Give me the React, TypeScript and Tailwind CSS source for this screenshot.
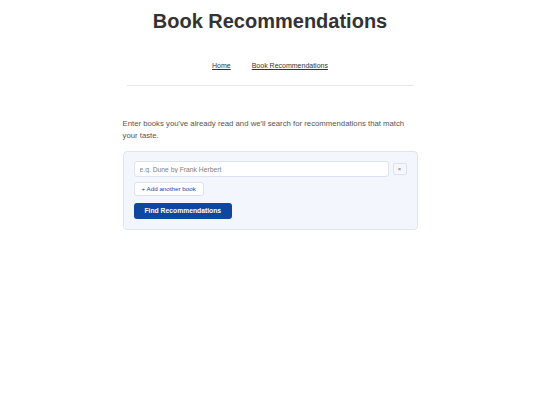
import React from 'react';

const App = () => {
  return (
    <div className="min-h-[405px] w-full bg-white font-['Liberation_Sans',Arial,sans-serif] text-[#333]">
      <div className="mx-auto w-[295px] pt-[8px]">
        <h1 className="text-center text-[20px] font-bold leading-[26px] text-[#333]">Book Recommendations</h1>
        <nav className="mt-[27px] flex justify-center gap-[21px] text-[7px] leading-[10px] text-[#333]">
          <a href="#" className="underline">Home</a>
          <a href="#" className="underline">Book Recommendations</a>
        </nav>
        <div className="mx-[4px] mt-[14px] h-px bg-[#e8e8e8]" />
        <p className="mt-[32px] text-[7.75px] leading-[12px] text-[#555]">
          Enter books you've already read and we'll search for recommendations that match your taste.
        </p>
        <div className="mt-[9px] flex flex-col items-start rounded-[4px] border border-[#dde5f2] bg-[#f3f6fd] px-[10px] pt-[9px] pb-[10px]">
          <div className="flex w-full items-center gap-[4px]">
            <input
              type="text"
              placeholder="e.g. Dune by Frank Herbert"
              className="h-[16px] flex-1 rounded-[3px] border border-[#dde3ec] bg-white px-[5px] text-[6.75px] text-[#333] outline-none placeholder:text-[#808080]"
            />
            <button className="flex h-[12px] w-[14px] items-center justify-center rounded-[2px] border border-[#dde3ec] bg-[#f5f7fb] text-[6px] leading-none text-[#666]">
              ×
            </button>
          </div>
          <button className="mt-[5px] h-[14px] rounded-[3px] border border-[#dde3ec] bg-white px-[7px] text-[6.25px] leading-none text-[#1d4a9c]">
            + Add another book
          </button>
          <button className="mt-[7px] h-[16px] rounded-[3px] bg-[#0d47a1] px-[11px] text-[6.75px] font-bold leading-none text-white">
            Find Recommendations
          </button>
        </div>
      </div>
    </div>
  );
};

export default App;
